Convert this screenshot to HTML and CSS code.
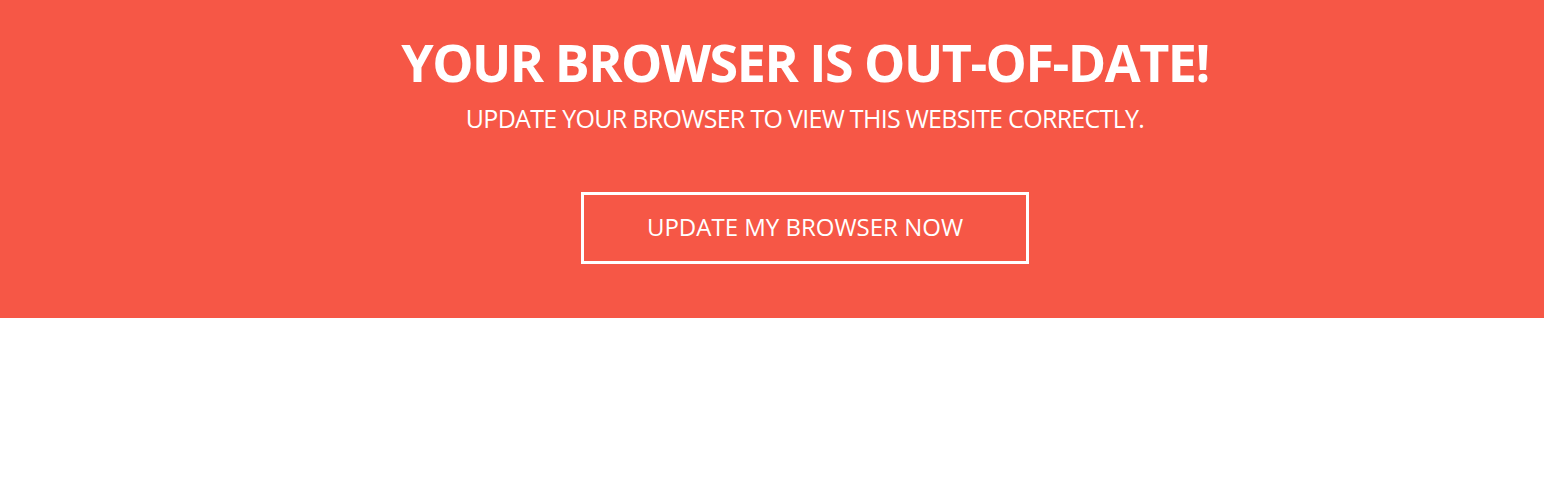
FILE: index.html
```html
<!DOCTYPE html>
<html>
<head>
<meta charset="utf-8">
<link rel="stylesheet" href="styles.css">
</head>
<body>
<div class="outdated">
  <div class="inner">
    <h1 class="title">YOUR BROWSER IS OUT-OF-DATE!</h1>
    <p class="subtitle">UPDATE YOUR BROWSER TO VIEW THIS WEBSITE CORRECTLY.</p>
    <a class="btn" href="#">UPDATE MY BROWSER NOW</a>
  </div>
</div>
</body>
</html>
```
FILE: styles.css
```css
html, body {
  margin: 0;
  padding: 0;
  background: #ffffff;
}
body {
  font-family: "Open Sans", "Liberation Sans", sans-serif;
}
.outdated {
  background: #f65746;
  height: 318px;
  color: #ffffff;
}
.inner {
  padding-left: 66px;
  display: flex;
  flex-direction: column;
  align-items: center;
  padding-top: 32px;
}
.title {
  margin: 0;
  font-size: 52px;
  font-weight: 700;
  line-height: 60px;
  letter-spacing: -1.5px;
}
.subtitle {
  margin: 11px 0 0;
  font-size: 25px;
  font-weight: 400;
  line-height: 30px;
  letter-spacing: -0.7px;
}
.btn {
  margin-top: 59px;
  box-sizing: border-box;
  width: 448px;
  height: 72px;
  padding-bottom: 4px;
  border: 3px solid #ffffff;
  color: #ffffff;
  text-decoration: none;
  display: flex;
  align-items: center;
  justify-content: center;
  font-size: 24px;
}
```
